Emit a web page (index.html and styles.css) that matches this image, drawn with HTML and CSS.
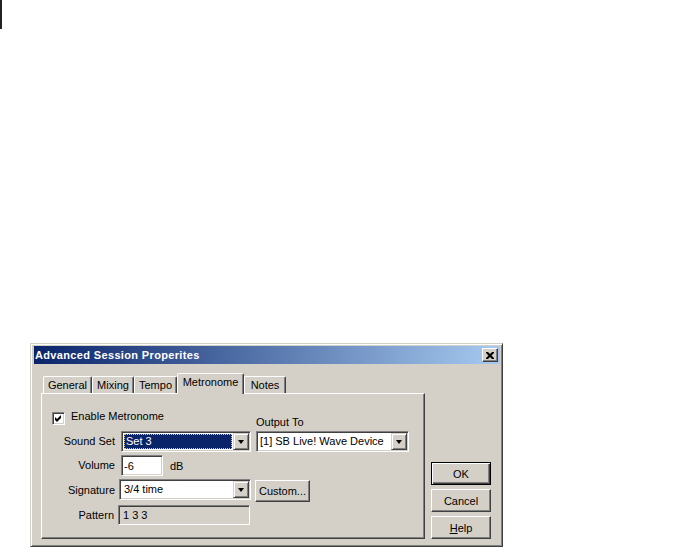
FILE: index.html
```html
<!DOCTYPE html>
<html lang="en">
<head>
    <meta charset="UTF-8">
    <meta name="viewport" content="width=device-width, initial-scale=1.0">
    <title>Advanced Session Properites</title>
    <link rel="stylesheet" href="styles.css">
</head>
<body>
    <div class="marker"></div>

    <div class="dialog">
        <div class="titlebar">
            <span class="title">Advanced Session Properites</span>
            <span class="close">
                <svg width="8" height="7" viewBox="0 0 8 7">
                    <path d="M0 0h2l2 2 2-2h2v1l-2.5 2.5L8 6v1H6L4 5 2 7H0V6l2.5-2.5L0 1z" fill="#000"/>
                </svg>
            </span>
        </div>

        <div class="dialog-body">
            <div class="tabctl">
                <div class="tabs">
                    <div class="tab tab-general">General</div>
                    <div class="tab tab-mixing">Mixing</div>
                    <div class="tab tab-tempo">Tempo</div>
                    <div class="tab tab-metronome active">Metronome</div>
                    <div class="tab tab-notes">Notes</div>
                </div>

                <div class="panel">
                    <div class="form">
                        <label class="check">
                            <span class="box">
                                <svg width="9" height="9" viewBox="0 0 9 9">
                                    <polygon points="1,3 3,5 7,1 7,4 3,8 1,6" fill="#000"/>
                                </svg>
                            </span>
                            <span class="check-text">Enable Metronome</span>
                        </label>
                        <span class="out-label">Output To</span>

                        <span class="lbl">Sound Set</span>
                        <div class="combo combo-sound">
                            <span class="val selected">Set 3</span>
                            <span class="drop"></span>
                        </div>
                        <div class="combo combo-output">
                            <span class="val">[1] SB Live! Wave Device</span>
                            <span class="drop"></span>
                        </div>

                        <span class="lbl">Volume</span>
                        <div class="volume">
                            <span class="edit">-6</span>
                            <span class="unit">dB</span>
                        </div>
                        <span></span>

                        <span class="lbl lbl-sig">Signature</span>
                        <div class="combo combo-sig">
                            <span class="val">3/4 time</span>
                            <span class="drop"></span>
                        </div>
                        <div><button class="btn btn-custom" type="button">Custom...</button></div>

                        <span class="lbl lbl-pattern">Pattern</span>
                        <span class="readonly">1 3 3</span>
                    </div>
                </div>
            </div>

            <div class="buttons">
                <button class="btn btn-default" type="button">OK</button>
                <button class="btn" type="button">Cancel</button>
                <button class="btn" type="button"><u>H</u>elp</button>
            </div>
        </div>
    </div>
</body>
</html>
```

FILE: styles.css
```css
body {
    margin: 0;
    background-color: #fff;
    color: #000;
    font-family: "Liberation Sans", Arial, sans-serif;
    font-size: 11px;
}

.marker {
    width: 2px;
    height: 29px;
    background-color: #222;
}

/* window frame */
.dialog {
    box-sizing: border-box;
    width: 473px;
    height: 204px;
    margin: 314px 0 0 30px;
    padding: 2px 2px 0 3px;
    background-color: #d4d0c8;
    border: 1px solid;
    border-color: #d4d0c8 #404040 #404040 #d4d0c8;
    box-shadow: inset 1px 1px #fff, inset -1px -1px #808080;
}

.titlebar {
    display: flex;
    align-items: center;
    justify-content: space-between;
    height: 18px;
    padding: 0 2px 0 1px;
    background: linear-gradient(to right, #0a246a, #a6caf0);
    color: #fff;
    font-weight: bold;
}

.title {
    letter-spacing: 0.35px;
}

.close {
    box-sizing: border-box;
    display: flex;
    align-items: center;
    justify-content: center;
    width: 16px;
    height: 14px;
    background-color: #d4d0c8;
    border: 1px solid;
    border-color: #fff #404040 #404040 #fff;
    box-shadow: inset -1px -1px #808080;
}

.dialog-body {
    display: flex;
    padding: 9px 0 0 7px;
}

/* tab control */
.tabctl {
    width: 384px;
}

.tabs {
    display: flex;
    align-items: flex-end;
    height: 20px;
    padding-left: 2px;
}

.tab {
    box-sizing: border-box;
    height: 17px;
    padding-top: 2px;
    text-align: center;
    border: 1px solid;
    border-bottom: none;
    border-color: #fff #404040 transparent #fff;
    border-radius: 2px 2px 0 0;
    box-shadow: inset -1px 0 #808080;
}

.tab-general { width: 49px; }
.tab-mixing { width: 42px; }
.tab-tempo { width: 43px; }
.tab-metronome { width: 67px; }
.tab-notes { width: 42px; }

.tab.active {
    position: relative;
    z-index: 1;
    height: 21px;
    margin-bottom: -1px;
    padding-top: 2px;
    background-color: #d4d0c8;
}

.panel {
    box-sizing: border-box;
    height: 146px;
    padding: 18px 0 0 10px;
    border: 1px solid;
    border-color: #fff #404040 #404040 #fff;
    box-shadow: inset -1px -1px #808080;
}

.form {
    display: grid;
    grid-template-columns: 64px 130px 153px;
    grid-template-rows: 19px 24px 24px 26px 20px;
    column-gap: 5px;
    align-items: start;
}

.check {
    grid-column: 1 / 3;
    display: flex;
    align-items: flex-start;
    gap: 6px;
    height: 13px;
}

.check-text {
    margin-top: -2px;
    line-height: 13px;
}

.box {
    box-sizing: border-box;
    display: flex;
    align-items: center;
    justify-content: center;
    width: 13px;
    height: 13px;
    background-color: #fff;
    border: 1px solid;
    border-color: #808080 #fff #fff #808080;
    box-shadow: inset 1px 1px #404040, inset -1px -1px #d4d0c8;
}

.out-label {
    align-self: end;
    margin-bottom: 2px;
    line-height: 13px;
}

.lbl {
    padding-right: 1px;
    line-height: 21px;
    text-align: right;
}

.lbl-sig {
    padding-top: 1px;
}

.lbl-pattern {
    line-height: 20px;
    padding-right: 2px;
}

/* sunken fields */
.combo,
.edit,
.readonly {
    box-sizing: border-box;
    display: flex;
    align-items: center;
    height: 21px;
    background-color: #fff;
    border: 1px solid;
    border-color: #808080 #fff #fff #808080;
    box-shadow: inset 1px 1px #404040, inset -1px -1px #d4d0c8;
    white-space: nowrap;
}

.combo {
    padding: 1px;
}

.combo .val {
    flex: 1;
    padding-left: 3px;
    line-height: 15px;
}

.combo .val.selected {
    margin: 0 1px 0 1px;
    padding-left: 2px;
    background-color: #0a246a;
    color: #fff;
    outline: 1px dotted #e8c870;
    outline-offset: -1px;
}

.combo-sound { width: 130px; }
.combo-output { width: 153px; }

.combo-output .val {
    padding-left: 2px;
}

.combo-sig {
    width: 132px;
    margin-left: -2px;
}

.drop {
    box-sizing: border-box;
    position: relative;
    width: 16px;
    height: 17px;
    background-color: #d4d0c8;
    border: 1px solid;
    border-color: #d4d0c8 #404040 #404040 #d4d0c8;
    box-shadow: inset 1px 1px #fff, inset -1px -1px #808080;
}

.drop::after {
    content: "";
    position: absolute;
    left: 4px;
    top: 6px;
    border-left: 3.5px solid transparent;
    border-right: 3.5px solid transparent;
    border-top: 4px solid #000;
}

.volume {
    display: flex;
    align-items: center;
    gap: 7px;
}

.edit {
    width: 42px;
    padding-left: 2px;
}

.readonly {
    width: 132px;
    height: 20px;
    margin-left: -3px;
    padding-left: 4px;
    background-color: #d4d0c8;
}

/* push buttons */
.btn {
    box-sizing: border-box;
    height: 23px;
    padding: 0;
    background-color: #d4d0c8;
    color: #000;
    font-family: "Liberation Sans", Arial, sans-serif;
    font-size: 11px;
    border: 1px solid;
    border-color: #fff #404040 #404040 #fff;
    box-shadow: inset -1px -1px #808080;
}

.btn-custom {
    width: 55px;
    height: 22px;
    margin: 1px 0 0 -1px;
}

.btn-default {
    border-color: #000;
    box-shadow: inset 1px 1px #fff, inset -1px -1px #404040, inset -2px -2px #808080;
}

.buttons {
    display: flex;
    flex-direction: column;
    justify-content: flex-end;
    gap: 4px;
    width: 60px;
    margin-left: 6px;
}
```
